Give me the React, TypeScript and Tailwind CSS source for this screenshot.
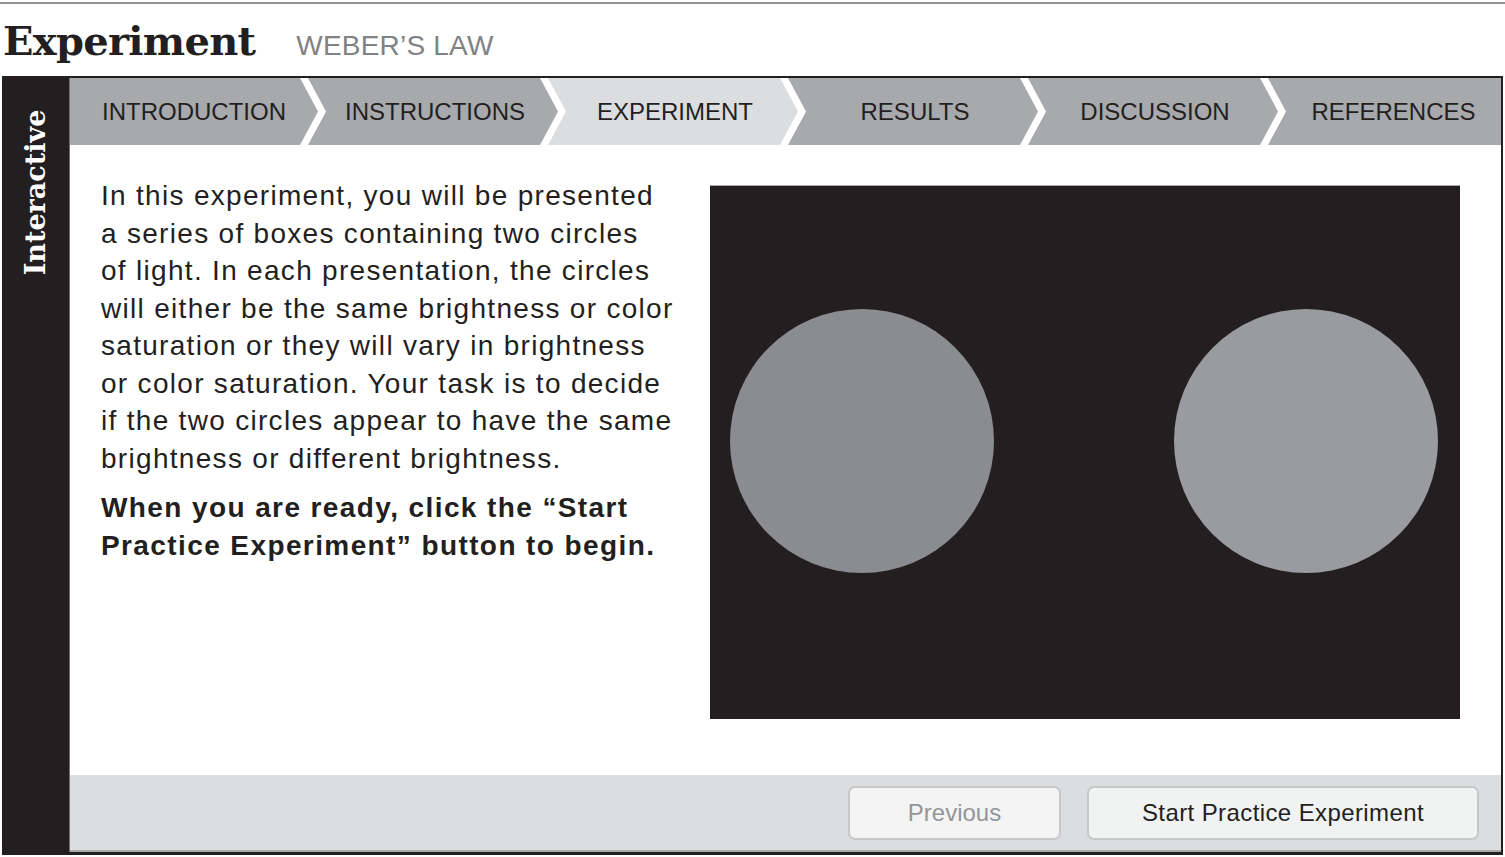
import React from "react";

const tabs = [
  "INTRODUCTION",
  "INSTRUCTIONS",
  "EXPERIMENT",
  "RESULTS",
  "DISCUSSION",
  "REFERENCES",
];

const paragraph = [
  "In this experiment, you will be presented",
  "a series of boxes containing two circles",
  "of light. In each presentation, the circles",
  "will either be the same brightness or color",
  "saturation or they will vary in brightness",
  "or color saturation. Your task is to decide",
  "if the two circles appear to have the same",
  "brightness or different brightness.",
];

const sans = "font-['Liberation_Sans','Helvetica',Arial,sans-serif]";
const slab = "font-['DejaVu_Serif','Liberation_Serif',serif]";

const Tab = ({ label, index }: { label: string; index: number }) => {
  const first = index === 0;
  const last = index === tabs.length - 1;
  const active = label === "EXPERIMENT";

  let shape = "";
  if (first)
    shape =
      "w-[248px] [clip-path:polygon(0_0,calc(100%_-_18px)_0,100%_50%,calc(100%_-_18px)_100%,0_100%)]";
  else if (last)
    shape =
      "flex-1 -ml-[10px] pl-[18px] [clip-path:polygon(0_0,100%_0,100%_100%,0_100%,18px_50%)]";
  else
    shape =
      "w-[250px] -ml-[10px] pl-[4px] [clip-path:polygon(0_0,calc(100%_-_18px)_0,100%_50%,calc(100%_-_18px)_100%,0_100%,18px_50%)]";

  return (
    <div
      className={`${shape} h-full flex items-center justify-center ${
        active ? "bg-[#dcdddf]" : "bg-[#a7a9ac]"
      }`}
    >
      <span className={`${sans} text-[24px] text-[#231f20] leading-none`}>
        {label}
      </span>
    </div>
  );
};

export default function App() {
  return (
    <div className="w-[1505px] h-[857px] bg-white overflow-hidden">
      <div className="h-[2px]" />
      <div className="h-[2px] bg-[#939598]" />

      <div className="h-[72px] flex items-baseline pl-[3px] pt-[12px]">
        <h1
          className={`${slab} font-bold text-[40px] leading-[50px] tracking-[-0.7px] text-[#231f20]`}
        >
          Experiment
        </h1>
        <span
          className={`${sans} ml-[41px] text-[28px] tracking-[0.2px] text-[#808285] leading-none`}
        >
          WEBER’S LAW
        </span>
      </div>

      <div className="ml-[2px] w-[1501px] h-[779px] bg-[#231f20] flex">
        <div className="w-[67px] flex items-start justify-center pt-[32px]">
          <div className="h-[168px] w-[40px] flex items-center justify-center">
            <span
              className={`${slab} font-bold text-[27px] text-white leading-none -rotate-90 whitespace-nowrap`}
            >
              Interactive
            </span>
          </div>
        </div>

        <div className="w-[1432px] mt-[2px] mb-[3px] border-l border-[#6d6e71] bg-white flex flex-col">
          <div className="h-[67px] flex bg-white">
            {tabs.map((t, i) => (
              <Tab key={t} label={t} index={i} />
            ))}
          </div>

          <div className="flex-1 flex pt-[40px] pl-[31px]">
            <div className={`${sans} w-[600px] -mt-[8px] text-[28px] tracking-[1.3px] text-[#231f20]`}>
              <p className="leading-[37.5px]">
                {paragraph.map((line, i) => (
                  <React.Fragment key={i}>
                    {line}
                    {i < paragraph.length - 1 && <br />}
                  </React.Fragment>
                ))}
              </p>
              <p className="mt-[12px] leading-[37.5px] font-bold tracking-[1.4px]">
                When you are ready, click the “Start
                <br />
                Practice Experiment” button to begin.
              </p>
            </div>

            <div className="ml-[9px] w-[750px] h-[534px] bg-[#231f20] border-t border-[#a7a9ac] flex justify-between pl-[20px] pr-[22px] pt-[123px]">
              <div className="w-[264px] h-[264px] rounded-full bg-[#8b8c8f]" />
              <div className="w-[264px] h-[264px] rounded-full bg-[#9a9b9e]" />
            </div>
          </div>

          <div className="h-[77px] bg-[#dcdddf] border-b-2 border-[#a7a9ac] flex items-start justify-end pt-[11px] pr-[22px] gap-[26px]">
            <button
              className={`${sans} w-[213px] h-[54px] rounded-[7px] border-2 border-[#c7c8ca] bg-[#f4f4f4] text-[24px] text-[#939598]`}
            >
              Previous
            </button>
            <button
              className={`${sans} w-[392px] h-[54px] rounded-[7px] border-2 border-[#c7c8ca] bg-[#f1f2f2] text-[24px] tracking-[0.4px] text-[#231f20]`}
            >
              Start Practice Experiment
            </button>
          </div>
        </div>
      </div>
    </div>
  );
}
